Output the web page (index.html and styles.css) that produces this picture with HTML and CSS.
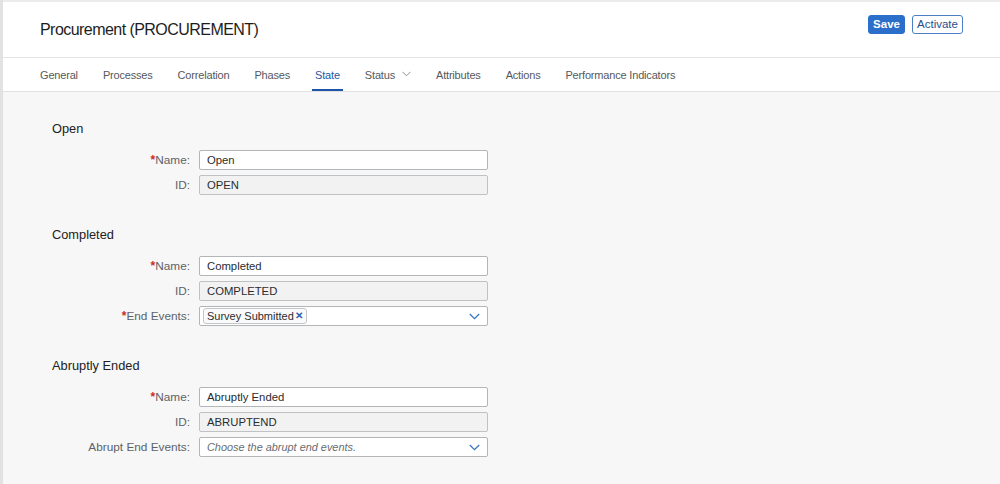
FILE: index.html
```html
<!DOCTYPE html>
<html>
<head>
<meta charset="utf-8">
<link rel="stylesheet" href="styles.css">
</head>
<body>
<div class="app">
  <header class="header">
    <h1 class="title">Procurement (PROCUREMENT)</h1>
    <div class="actions">
      <button class="btn btn-primary">Save</button>
      <button class="btn btn-ghost">Activate</button>
    </div>
  </header>
  <nav class="tabs">
    <span class="tab">General</span>
    <span class="tab">Processes</span>
    <span class="tab">Correlation</span>
    <span class="tab">Phases</span>
    <span class="tab tab-active">State</span>
    <span class="tab tab-menu">Status <svg class="tab-chev" width="9" height="6" viewBox="0 0 9 6"><path d="M0.5 0.8 L4.5 4.8 L8.5 0.8" fill="none" stroke="#8a8d90" stroke-width="1"/></svg></span>
    <span class="tab">Attributes</span>
    <span class="tab">Actions</span>
    <span class="tab">Performance Indicators</span>
  </nav>
  <main class="content">
    <section class="section">
      <h2 class="section-title">Open</h2>
      <div class="form">
        <label class="label"><span class="req">*</span>Name:</label>
        <div class="field">Open</div>
        <label class="label">ID:</label>
        <div class="field field-ro">OPEN</div>
      </div>
    </section>
    <section class="section">
      <h2 class="section-title">Completed</h2>
      <div class="form">
        <label class="label"><span class="req">*</span>Name:</label>
        <div class="field">Completed</div>
        <label class="label">ID:</label>
        <div class="field field-ro">COMPLETED</div>
        <label class="label"><span class="req">*</span>End Events:</label>
        <div class="field field-combo">
          <span class="token">Survey Submitted <span class="token-x">✕</span></span>
          <svg class="combo-chev" width="11" height="7" viewBox="0 0 11 7"><path d="M0.8 1 L5.5 5.7 L10.2 1" fill="none" stroke="#3b74c2" stroke-width="1.3"/></svg>
        </div>
      </div>
    </section>
    <section class="section">
      <h2 class="section-title">Abruptly Ended</h2>
      <div class="form">
        <label class="label"><span class="req">*</span>Name:</label>
        <div class="field">Abruptly Ended</div>
        <label class="label">ID:</label>
        <div class="field field-ro">ABRUPTEND</div>
        <label class="label">Abrupt End Events:</label>
        <div class="field field-combo">
          <span class="placeholder">Choose the abrupt end events.</span>
          <svg class="combo-chev" width="11" height="7" viewBox="0 0 11 7"><path d="M0.8 1 L5.5 5.7 L10.2 1" fill="none" stroke="#3b74c2" stroke-width="1.3"/></svg>
        </div>
      </div>
    </section>
  </main>
</div>
</body>
</html>
```

FILE: styles.css
```css
* { box-sizing: border-box; }
html, body { margin: 0; padding: 0; }
body {
  font-family: "Liberation Sans", Arial, sans-serif;
  color: #32363a;
  background: #f7f7f7;
}
.app {
  border-left: 3px solid #e2e2e2;
  min-height: 484px;
  background: #f7f7f7;
}
.header {
  height: 58px;
  background: #fff;
  border-top: 2px solid #ebebeb;
  border-bottom: 1px solid #e3e3e3;
  display: flex;
  justify-content: space-between;
  align-items: flex-start;
  padding: 0 37px 0 36px;
}
.title {
  margin: 19px 0 0 1px;
  font-size: 16px;
  font-weight: normal;
  letter-spacing: -0.55px;
  line-height: 18px;
  color: #1d1d1d;
}
.actions {
  display: flex;
  gap: 7px;
  margin-top: 13px;
}
.btn {
  height: 19px;
  font-family: "Liberation Sans", Arial, sans-serif;
  font-size: 11.5px;
  border-radius: 3px;
  padding: 0;
  line-height: 17px;
  cursor: pointer;
}
.btn-primary {
  width: 37px;
  background: #2b6fca;
  border: 1px solid #2b6fca;
  color: #fff;
  font-weight: bold;
}
.btn-ghost {
  width: 51px;
  background: #fff;
  border: 1px solid #4a7fc6;
  color: #1f4f8c;
}
.tabs {
  height: 34px;
  background: #fff;
  border-bottom: 1px solid #e0e0e0;
  display: flex;
  align-items: stretch;
  gap: 25px;
  padding: 1px 0 0 37px;
}
.tab {
  font-size: 11px;
  color: #55595d;
  display: flex;
  align-items: center;
  padding-bottom: 1px;
  position: relative;
  letter-spacing: -0.18px;
}
.tab-active {
  color: #2656a6;
}
.tab-active::after {
  content: "";
  position: absolute;
  left: -3px;
  right: -3px;
  bottom: 0;
  height: 2px;
  background: #1f55a8;
}
.tab-chev { margin-left: 7px; margin-top: -2px; }
.content {
  padding: 29px 0 0 49px;
}
.section { margin-bottom: 32px; }
.section-title {
  margin: 0 0 13px 0;
  font-size: 12.8px;
  font-weight: normal;
  line-height: 16px;
  color: #222;
}
.form {
  display: grid;
  grid-template-columns: 138px 289px;
  column-gap: 9px;
  row-gap: 5px;
  align-items: center;
}
.label {
  text-align: right;
  font-size: 11.8px;
  color: #5e6266;
}
.req { color: #cf2a2a; font-weight: bold; font-size: 12px; }
.field {
  height: 20px;
  border: 1px solid #b3b6b9;
  border-radius: 2px;
  background: #fff;
  font-size: 11.3px;
  line-height: 18px;
  padding: 0 7px;
  color: #2a2d30;
  display: flex;
  align-items: center;
}
.field-ro {
  background: #f2f2f2;
  border-color: #bfc1c3;
}
.field-combo {
  padding: 0 7px 0 3px;
  justify-content: space-between;
}
.token {
  height: 16px;
  border: 1px solid #c4c6c8;
  border-radius: 3px;
  background: #fafafa;
  padding: 0 3px;
  font-size: 11px;
  line-height: 14px;
  display: flex;
  align-items: center;
  gap: 1px;
}
.token-x { color: #2b5fb0; font-size: 10px; font-weight: bold; }
.placeholder {
  font-style: italic;
  color: #6a6d70;
  padding-left: 4px;
  font-size: 10.9px;
}
.combo-chev { margin-right: 0; }
```
